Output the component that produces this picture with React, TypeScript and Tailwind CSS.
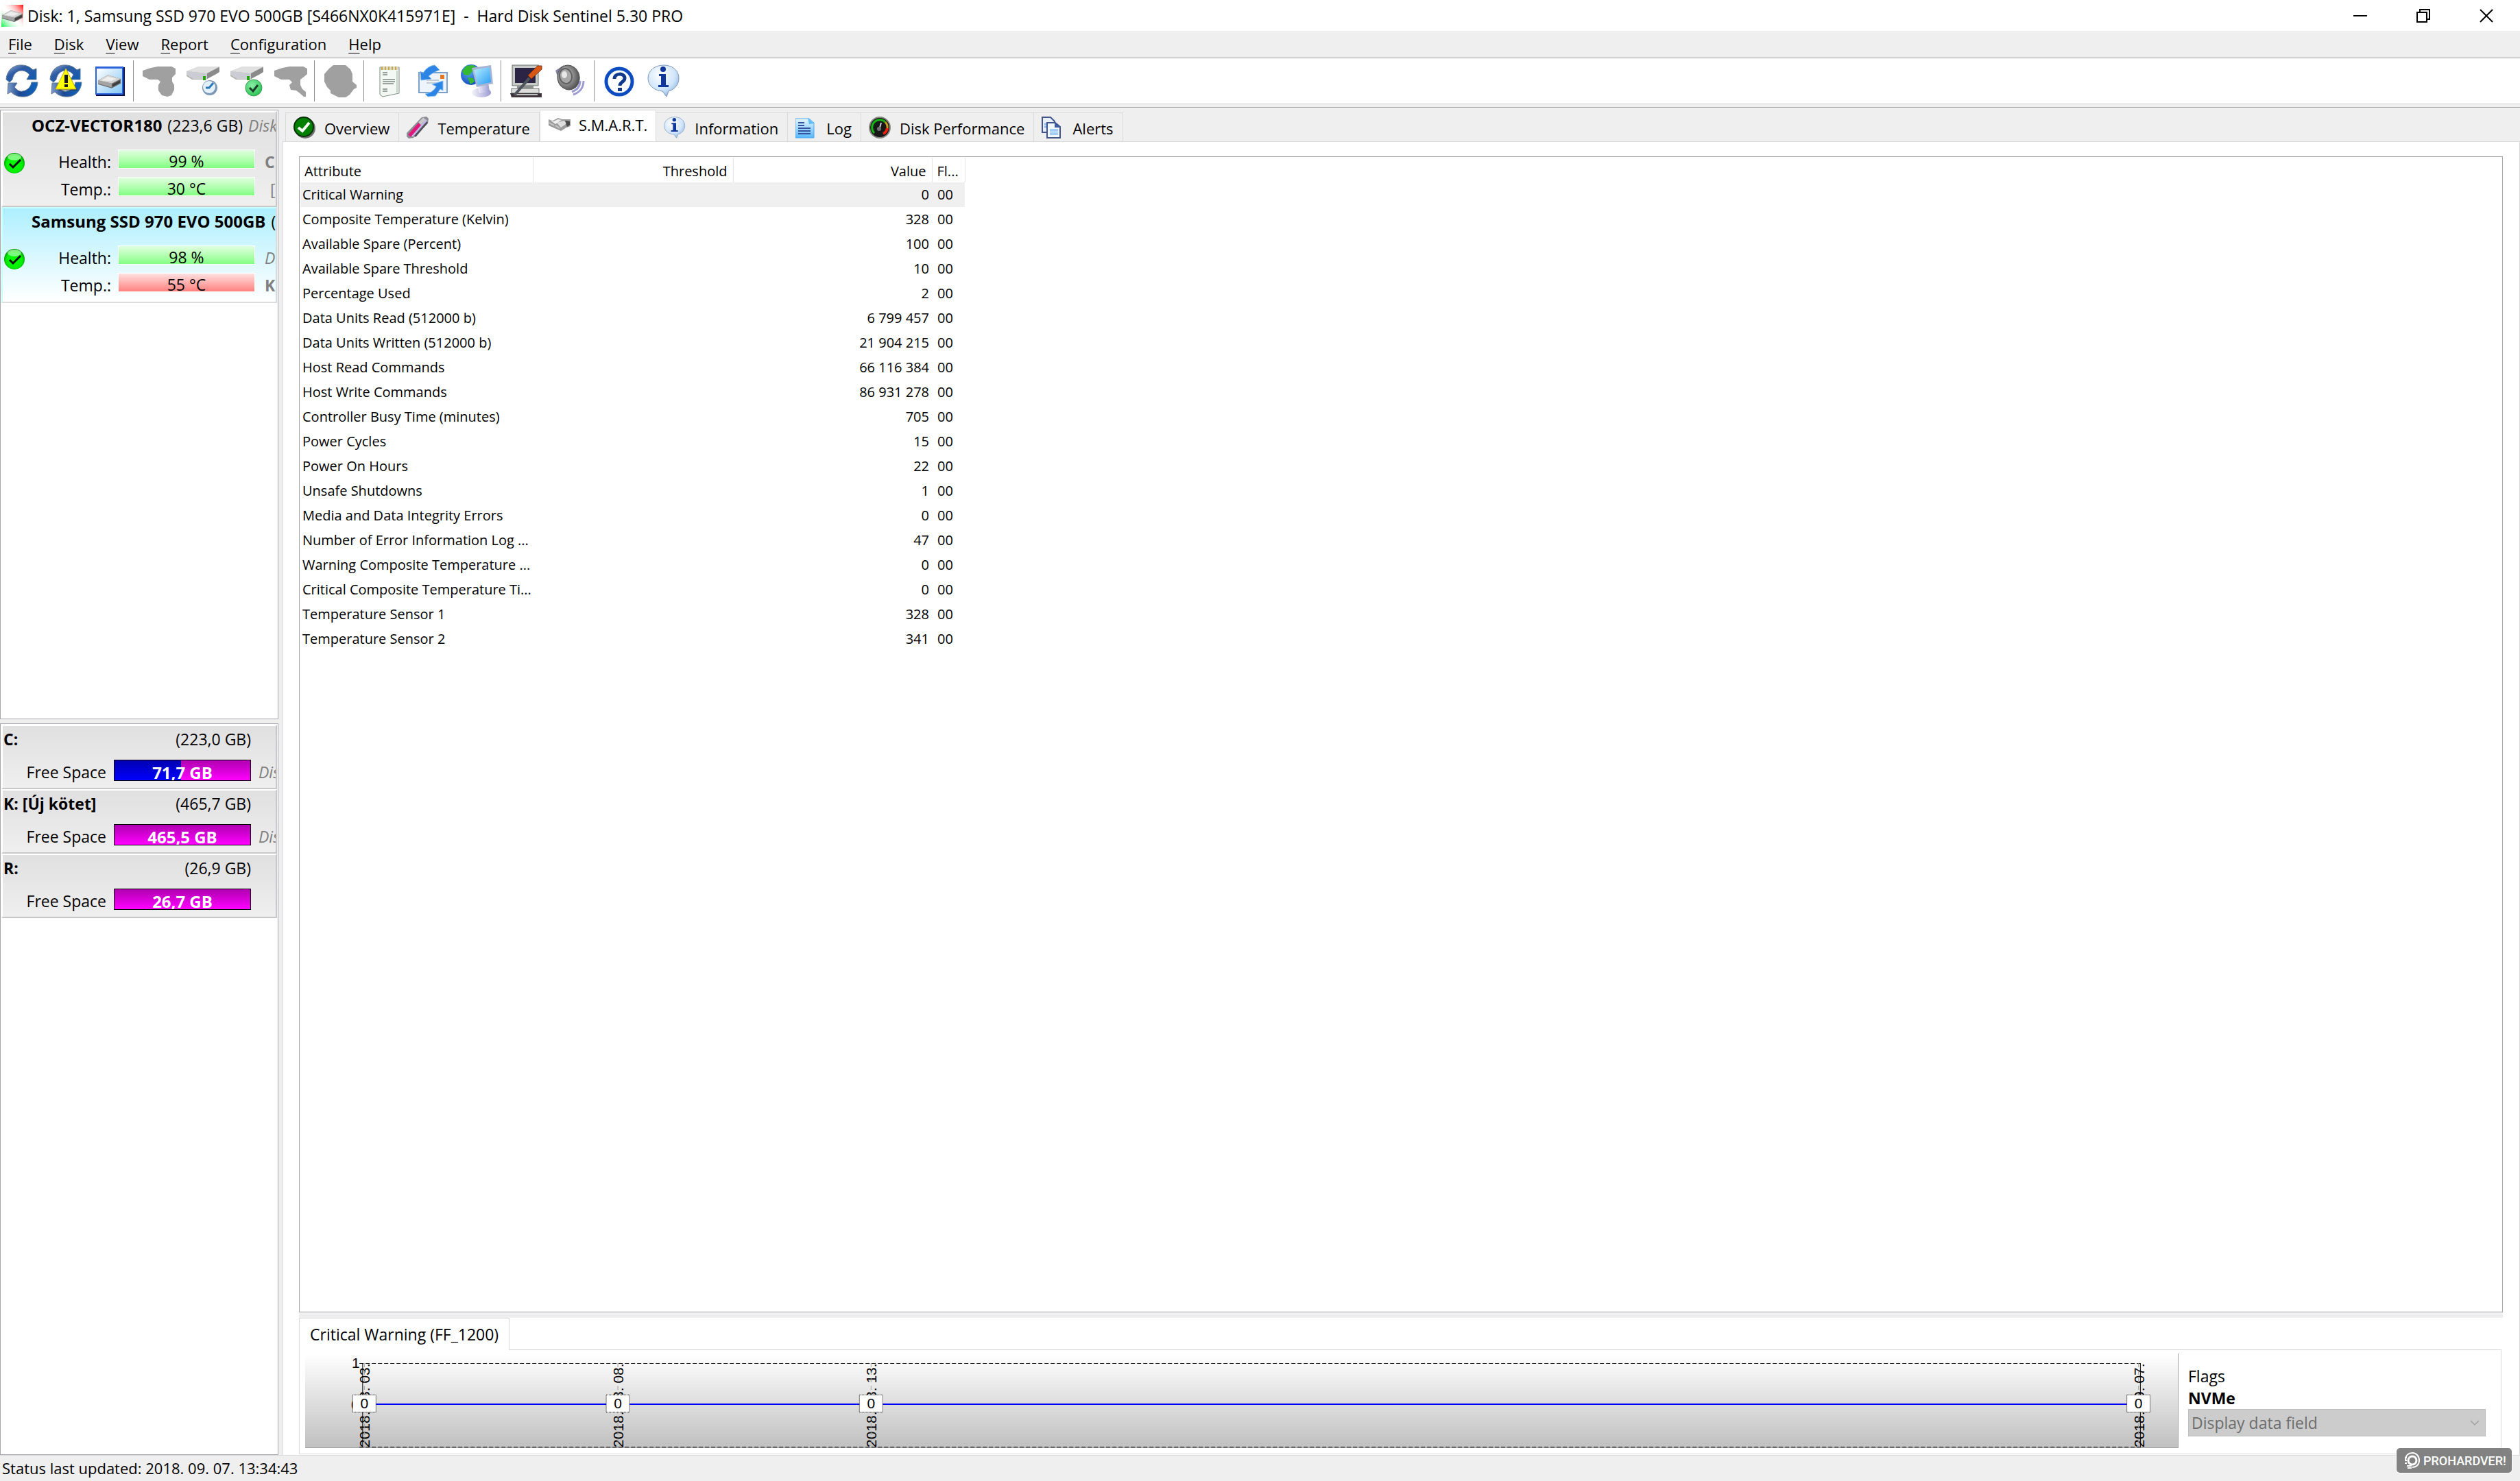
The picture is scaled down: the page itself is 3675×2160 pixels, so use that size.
import type { ReactNode } from "react";
import clsx from "clsx";

type Disk = {
  name: string;
  size: string;
  tag: string;
  health: string;
  temp: string;
  hot: boolean;
  selected: boolean;
  notes: { text: string; className: string }[];
};

const DISKS: Disk[] = [
  {
    name: "OCZ-VECTOR180",
    size: "(223,6 GB)",
    tag: "Disk",
    health: "99 %",
    temp: "30 °C",
    hot: false,
    selected: false,
    notes: [
      { text: "C:", className: "font-bold" },
      { text: "[L", className: "pl-2" },
    ],
  },
  {
    name: "Samsung SSD 970 EVO 500GB",
    size: "(465,8 GB)",
    tag: "",
    health: "98 %",
    temp: "55 °C",
    hot: true,
    selected: true,
    notes: [
      { text: "Disk", className: "italic" },
      { text: "K:", className: "font-bold" },
    ],
  },
];

const VOLUMES = [
  { name: "C:", size: "(223,0 GB)", free: "71,7 GB", used: 49, note: "Disk" },
  { name: "K: [Új kötet]", size: "(465,7 GB)", free: "465,5 GB", used: 0, note: "Disk" },
  { name: "R:", size: "(26,9 GB)", free: "26,7 GB", used: 0, note: "" },
];

const ATTRIBUTES: [string, string][] = [
  ["Critical Warning", "0"],
  ["Composite Temperature (Kelvin)", "328"],
  ["Available Spare (Percent)", "100"],
  ["Available Spare Threshold", "10"],
  ["Percentage Used", "2"],
  ["Data Units Read (512000 b)", "6 799 457"],
  ["Data Units Written (512000 b)", "21 904 215"],
  ["Host Read Commands", "66 116 384"],
  ["Host Write Commands", "86 931 278"],
  ["Controller Busy Time (minutes)", "705"],
  ["Power Cycles", "15"],
  ["Power On Hours", "22"],
  ["Unsafe Shutdowns", "1"],
  ["Media and Data Integrity Errors", "0"],
  ["Number of Error Information Log ...", "47"],
  ["Warning Composite Temperature ...", "0"],
  ["Critical Composite Temperature Ti...", "0"],
  ["Temperature Sensor 1", "328"],
  ["Temperature Sensor 2", "341"],
];

const POINTS = [
  { date: "2018. 08. 03.", x: "3.16%" },
  { date: "2018. 08. 08.", x: "16.7%" },
  { date: "2018. 08. 13.", x: "30.22%" },
  { date: "2018. 09. 07.", x: "97.9%" },
];

/* ---------- icons ---------- */

function Defs() {
  return (
    <svg className="absolute h-0 w-0" aria-hidden="true">
      <defs>
        <linearGradient id="blueArc" x1="0" y1="0" x2="1" y2="1">
          <stop offset="0" stopColor="#9fb4d6" />
          <stop offset="0.35" stopColor="#2f5ca4" />
          <stop offset="1" stopColor="#0c5cb0" />
        </linearGradient>
        <linearGradient id="blueArc2" x1="0" y1="0" x2="1" y2="0">
          <stop offset="0" stopColor="#7f9cc8" />
          <stop offset="0.4" stopColor="#1c4a94" />
          <stop offset="1" stopColor="#0f66c0" />
        </linearGradient>
        <linearGradient id="skyBox" x1="0" y1="0" x2="1" y2="1">
          <stop offset="0" stopColor="#ffffff" />
          <stop offset="1" stopColor="#86c8f4" />
        </linearGradient>
        <radialGradient id="bubble" cx="0.4" cy="0.3" r="0.8">
          <stop offset="0" stopColor="#ffffff" />
          <stop offset="0.6" stopColor="#cfe4fa" />
          <stop offset="1" stopColor="#7fa8d8" />
        </radialGradient>
        <radialGradient id="greenBall" cx="0.5" cy="0.55" r="0.55">
          <stop offset="0" stopColor="#00ff00" />
          <stop offset="0.7" stopColor="#00f000" />
          <stop offset="1" stopColor="#008a00" />
        </radialGradient>
        <radialGradient id="mint" cx="0.4" cy="0.35" r="0.7">
          <stop offset="0" stopColor="#8af0a8" />
          <stop offset="1" stopColor="#28c050" />
        </radialGradient>
        <radialGradient id="cone" cx="0.4" cy="0.4" r="0.7">
          <stop offset="0" stopColor="#e8e8e8" />
          <stop offset="0.5" stopColor="#8c8c8c" />
          <stop offset="1" stopColor="#404040" />
        </radialGradient>
        <radialGradient id="earth" cx="0.4" cy="0.35" r="0.7">
          <stop offset="0" stopColor="#58a8f8" />
          <stop offset="1" stopColor="#1048b8" />
        </radialGradient>
        <linearGradient id="screen" x1="0" y1="0" x2="1" y2="1">
          <stop offset="0" stopColor="#b8f0ff" />
          <stop offset="1" stopColor="#2a9cf4" />
        </linearGradient>
        <linearGradient id="lilac" x1="0" y1="0" x2="1" y2="0">
          <stop offset="0" stopColor="#f4f4fa" />
          <stop offset="1" stopColor="#9c9cd4" />
        </linearGradient>
        <linearGradient id="appGreen" x1="0" y1="1" x2="0.5" y2="0.5">
          <stop offset="0" stopColor="#00f040" />
          <stop offset="1" stopColor="#ffffff" stopOpacity="0" />
        </linearGradient>
        <linearGradient id="appRed" x1="1" y1="0" x2="0.4" y2="0.5">
          <stop offset="0" stopColor="#ff0000" />
          <stop offset="1" stopColor="#ffffff" stopOpacity="0" />
        </linearGradient>
        <linearGradient id="logPage" x1="0" y1="0" x2="0" y2="1">
          <stop offset="0" stopColor="#e4f4ff" />
          <stop offset="1" stopColor="#58b8f8" />
        </linearGradient>
        <linearGradient id="chartBg" x1="0" y1="0" x2="0" y2="1">
          <stop offset="0" stopColor="#ffffff" />
          <stop offset="1" stopColor="#c0c0c0" />
        </linearGradient>
      </defs>
    </svg>
  );
}

function Icon({ children }: { children: ReactNode }) {
  return (
    <svg viewBox="0 0 48 48" className="h-12 w-12" aria-hidden="true">
      {children}
    </svg>
  );
}

function SmallIcon({ children }: { children: ReactNode }) {
  return (
    <svg viewBox="0 0 32 32" className="h-8 w-8 shrink-0" aria-hidden="true">
      {children}
    </svg>
  );
}

// 32x18 drive body, reused at several sizes
function DriveBody() {
  return (
    <g>
      <path d="M1 8 L14 1 L31 6 L31 12 L19 18 L1 13 Z" fill="#6a6a6a" />
      <path d="M1 8 L14 1 L31 6 L19 12 Z" fill="#d2d2d2" />
      <path d="M5 8 L14 3 L25 6 L18 9 Z" fill="#eeeeee" />
      <path d="M1 8 L19 12 V17 L1 12 Z" fill="#a4a4a4" />
      <path d="M20 13 L30 8 V11 L20 16 Z" fill="#3c3c3c" />
    </g>
  );
}

function AppIcon() {
  return (
    <SmallIcon>
      <rect width="32" height="32" fill="#fff" />
      <rect width="32" height="32" fill="url(#appGreen)" />
      <rect width="32" height="32" fill="url(#appRed)" />
      <g transform="translate(0 7)">
        <DriveBody />
      </g>
    </SmallIcon>
  );
}

function RefreshArrows() {
  return (
    <g>
      <path
        d="M1 22 C2 8 12 0 24 1 C31 1 36 4 40 8 L45 6 V22 H31 L35 15 C31 10 27 9 23 9 C16 9 11 15 10 22 L6 26 Z"
        fill="url(#blueArc)"
        stroke="#5f7896"
        strokeWidth="1"
      />
      <path
        d="M47 26 C46 40 36 48 24 47 C17 47 12 44 8 40 L3 43 L4 27 H17 L13 33 C17 38 21 40 25 39 C32 38 37 33 38 26 Z"
        fill="url(#blueArc2)"
        stroke="#5f7896"
        strokeWidth="1"
      />
    </g>
  );
}

function RefreshIcon() {
  return (
    <Icon>
      <RefreshArrows />
    </Icon>
  );
}

function RefreshWarningIcon() {
  return (
    <Icon>
      <RefreshArrows />
      <path d="M26 10 L41 38 H13 Z" fill="#303030" opacity="0.6" />
      <path d="M24 6 L39 36 H9 Z" fill="#ffff00" stroke="#c8b400" strokeWidth="1" />
      <path d="M22 15 H27 V27 H22 Z M22 29 H27 V33 H22 Z" fill="#181818" />
    </Icon>
  );
}

function DiskWindowIcon() {
  return (
    <Icon>
      <rect x="4" y="4" width="42" height="42" fill="#04104c" />
      <rect x="3" y="3" width="41" height="41" fill="#2a62dc" />
      <rect x="5" y="6" width="37" height="36" fill="url(#skyBox)" />
      <g transform="translate(6 14) scale(1.1 1.15)">
        <DriveBody />
      </g>
    </Icon>
  );
}

function DriveOutline() {
  return (
    <g>
      <path d="M0 10 L18 3 H48 V11 L42 15 L28 22 H8 L0 17 Z" fill="#b4b4b4" />
      <path d="M0 10 L18 3 H48 L30 13 Z" fill="#e0e0e0" />
      <path d="M0 10 L30 13 V21 L10 21 L0 15 Z" fill="#ccccd4" />
      <path d="M30 13 L48 4 V11 L30 21 Z" fill="#8a8a8a" />
      <rect x="24" y="17" width="4" height="6" fill="#28a010" />
    </g>
  );
}

function DriveGreyIcon() {
  return (
    <Icon>
      <path
        d="M0 9 L12 5 L22 3 H42 L48 6 V14 L43 19 V25 L46 30 V37 L42 45 L36 47 L28 45 L23 38 V30 L26 25 L22 22 H10 L0 17 Z"
        fill="#a0a0a0"
      />
    </Icon>
  );
}

function DriveClockIcon() {
  return (
    <Icon>
      <DriveOutline />
      <circle cx="34" cy="34" r="11" fill="#7c98b4" />
      <circle cx="33" cy="33" r="9" fill="#e4f0fa" />
      <path d="M39 27 L33 34 H28" fill="none" stroke="#2a78b8" strokeWidth="3" />
    </Icon>
  );
}

function DriveCheckIcon() {
  return (
    <Icon>
      <DriveOutline />
      <circle cx="34" cy="34" r="12" fill="url(#mint)" stroke="#3c9c58" strokeWidth="1" />
      <path d="M28 34 L33 39 L40 30" fill="none" stroke="#1c3c28" strokeWidth="3" />
    </Icon>
  );
}

function DriveToolIcon() {
  return (
    <Icon>
      <path
        d="M0 9 L12 5 L22 3 H42 L48 6 V14 L42 19 L38 22 V30 L41 36 L46 40 V47 H43 L36 41 L32 38 L24 37 L22 30 L26 26 L22 22 H10 L0 17 Z"
        fill="#a0a0a0"
      />
    </Icon>
  );
}

function RoundGreyIcon() {
  return (
    <Icon>
      <path
        d="M8 6 L14 1 H32 L39 7 L42 14 V25 L48 30 V34 L44 36 L38 44 L32 48 H22 L10 42 V38 L5 33 L1 25 V14 Z"
        fill="#a0a0a0"
      />
    </Icon>
  );
}

function NotepadIcon() {
  return (
    <Icon>
      <path d="M10 4 H38 V42 L14 47 L10 44 Z" fill="#f4f8f4" stroke="#7c8c84" strokeWidth="1" />
      <path d="M11 3 H37 V8 H11 Z" fill="#dcd8c4" />
      <path d="M13 3 V8 M18 3 V8 M23 3 V8 M28 3 V8 M33 3 V8" stroke="#c8a84c" strokeWidth="2" />
      <path d="M14 12 H21 M14 15 H21 M14 22 H32 M14 25 H32 M14 28 H30 M14 36 H21 M14 39 H21" stroke="#9ca4a0" strokeWidth="2" />
      <path d="M35 9 V41" stroke="#c4d4cc" strokeWidth="2" />
    </Icon>
  );
}

function MailIcon() {
  return (
    <Icon>
      <rect x="3" y="12" width="41" height="29" fill="#eef4fc" stroke="#7ca0cc" strokeWidth="2" />
      <rect x="34" y="15" width="6" height="6" fill="#e07828" />
      <path d="M14 23 H32 M14 27 H30" stroke="#c4ccd8" strokeWidth="2" />
      <path d="M5 10 L6 23 L21 21 L17 17 C22 13 27 10 33 8 L26 1 C18 2 12 7 9 13 Z" fill="#2c84e4" stroke="#78b4f0" strokeWidth="1" />
      <path d="M38 24 V38 L34 36 L27 46 L16 47 L12 43 C20 42 26 37 28 32 L22 29 Z" fill="#2c84e4" stroke="#88c0f8" strokeWidth="1" />
    </Icon>
  );
}

function GlobeIcon() {
  return (
    <Icon>
      <circle cx="15" cy="15" r="15" fill="url(#earth)" />
      <path d="M8 2 L18 1 L24 5 L16 11 L12 16 L5 15 L2 10 Z M10 19 L18 20 L20 25 L14 29 Z" fill="#34b830" />
      <ellipse cx="30" cy="41" rx="14" ry="7" fill="url(#lilac)" />
      <path d="M24 28 L40 26 L42 40 L27 42 Z" fill="url(#lilac)" />
      <path d="M16 5 L44 1 L47 28 L23 33 Z" fill="#a8b4d4" />
      <path d="M19 8 L42 4 L44 26 L25 30 Z" fill="url(#screen)" />
    </Icon>
  );
}

function ComputerIcon() {
  return (
    <Icon>
      <rect x="3" y="1" width="38" height="30" fill="#c8ccc8" stroke="#6c706c" strokeWidth="1" />
      <rect x="7" y="5" width="30" height="22" fill="#2c2444" />
      <path d="M10 31 H34 V35 H10 Z" fill="#8c908c" />
      <path d="M2 35 H42 V42 H2 Z" fill="#dcdcdc" stroke="#6c706c" strokeWidth="1" />
      <path d="M0 42 H46 V48 H2 Z" fill="#3c3438" />
      <path d="M6 44 H40" stroke="#c0c0c0" strokeWidth="2" />
      <path d="M6 45 L28 20" stroke="#50545c" strokeWidth="4" />
      <path d="M26 16 L40 2 H46 V7 L31 21 Z" fill="#d85818" stroke="#8c3008" strokeWidth="1" />
    </Icon>
  );
}

function SpeakerIcon() {
  return (
    <Icon>
      <path d="M2 9 L14 1 L20 16 L6 20 Z" fill="#8484a8" />
      <ellipse cx="21" cy="19" rx="16" ry="18" fill="url(#cone)" stroke="#505050" strokeWidth="1" transform="rotate(-14 21 19)" />
      <ellipse cx="17" cy="17" rx="9" ry="11" fill="#a8a8a8" stroke="#606060" strokeWidth="2" transform="rotate(-14 17 17)" />
      <ellipse cx="15" cy="15" rx="4" ry="5" fill="#e8e8e8" />
      <path d="M38 24 C38 31 34 37 26 40 M43 24 C43 34 37 41 28 44" fill="none" stroke="#9c9cd0" strokeWidth="3" />
    </Icon>
  );
}

function HelpIcon() {
  return (
    <Icon>
      <circle cx="23" cy="25" r="19" fill="#fff" stroke="#0c4cc0" strokeWidth="5" />
      <path d="M16 21 C16 12 31 12 31 20 C31 26 24 25 24 31" fill="none" stroke="#10388c" strokeWidth="5" />
      <rect x="21" y="34" width="6" height="5" fill="#10388c" />
    </Icon>
  );
}

function InfoBubble() {
  return (
    <g>
      <path
        d="M24 1 C37 1 46 9 46 20 C46 30 39 37 31 39 L28 47 L22 39 C10 38 1 31 1 20 C1 9 11 1 24 1 Z"
        fill="url(#bubble)"
        stroke="#7c98bc"
        strokeWidth="1"
      />
      <circle cx="23" cy="7" r="4" fill="#10389c" />
      <path d="M17 14 H27 V30 H31 V33 H16 V30 H20 V17 H17 Z" fill="#10389c" />
    </g>
  );
}

function InfoIcon() {
  return (
    <Icon>
      <InfoBubble />
    </Icon>
  );
}

function OverviewIcon() {
  return (
    <SmallIcon>
      <circle cx="17" cy="17" r="15" fill="#707070" />
      <circle cx="15" cy="15" r="14" fill="#008000" stroke="#003000" strokeWidth="2" />
      <path d="M7 16 L13 21 L23 9" fill="none" stroke="#fff" strokeWidth="4" />
    </SmallIcon>
  );
}

function ThermometerIcon() {
  return (
    <SmallIcon>
      <path d="M0 24 L22 1 L29 0 L32 3 L31 10 L10 31 L3 32 L0 29 Z" fill="#8c8c94" />
      <path d="M12 29 L30 8" stroke="#50505c" strokeWidth="3" />
      <path d="M8 29 L29 5" stroke="#c0b8e4" strokeWidth="3" />
      <path d="M4 28 L19 11" stroke="#e0187c" strokeWidth="5" />
      <path d="M19 10 L26 3" stroke="#c8c8c8" strokeWidth="5" />
    </SmallIcon>
  );
}

function SmartIcon() {
  return (
    <SmallIcon>
      <path d="M0 8 L6 10 L14 6 L20 8 L32 8 V18 L26 20 L18 25 L9 21 L0 17 Z" fill="#9c9c9c" />
      <path d="M2 9 L7 11 L14 8 L19 9 L10 15 Z" fill="#f0f0f0" />
      <path d="M12 13 L22 10 L28 13 L18 20 Z" fill="#dedede" />
      <path d="M24 10 L31 11 V16 L27 19 Z" fill="#484848" />
      <path d="M1 13 L8 17 M10 17 L16 21" stroke="#c8c8c8" strokeWidth="2" />
    </SmallIcon>
  );
}

function InformationIcon() {
  return (
    <SmallIcon>
      <g transform="scale(0.667)">
        <InfoBubble />
      </g>
    </SmallIcon>
  );
}

function LogIcon() {
  return (
    <SmallIcon>
      <path d="M0 3 H20 L27 9 V31 H0 Z" fill="url(#logPage)" stroke="#50a8f0" strokeWidth="1" />
      <path d="M18 2 L27 10 L20 11 Z" fill="#5cbcfc" />
      <path d="M4 9 H13 M4 13 H13 M4 17 H22 M4 21 H22 M4 25 H22" stroke="#3454a0" strokeWidth="2" />
    </SmallIcon>
  );
}

function GaugeIcon() {
  return (
    <SmallIcon>
      <circle cx="16" cy="16" r="15" fill="#181818" stroke="#888880" strokeWidth="2" />
      <path d="M8 24 A11 11 0 1 1 24 8" fill="none" stroke="#14b414" strokeWidth="3" />
      <path d="M24 8 A11 11 0 0 1 27 17" fill="none" stroke="#c8a020" strokeWidth="3" />
      <path d="M27 17 A11 11 0 0 1 21 25" fill="none" stroke="#f02010" strokeWidth="4" />
      <path d="M15 20 L18 9" stroke="#d0d0d0" strokeWidth="2" />
      <circle cx="15" cy="18" r="3" fill="#707070" />
    </SmallIcon>
  );
}

function AlertsIcon() {
  return (
    <SmallIcon>
      <path d="M1 1 H13 L19 7 V23 H1 Z" fill="#e8f0fc" stroke="#44548c" strokeWidth="2" />
      <path d="M4 11 H10 M4 15 H10" stroke="#90bcf4" strokeWidth="3" />
      <path d="M8 9 H20 L27 15 V31 H8 Z" fill="#f2f8ff" stroke="#44548c" strokeWidth="2" />
      <path d="M19 8 L28 16 H19 Z" fill="#3c5ca4" />
      <path d="M12 20 H24 M12 25 H24" stroke="#a4ccf8" strokeWidth="4" />
    </SmallIcon>
  );
}

function OkBall() {
  return (
    <svg viewBox="0 0 30 30" className="h-[30px] w-[30px]" aria-hidden="true">
      <circle cx="15" cy="15" r="15" fill="url(#greenBall)" />
      <ellipse cx="15" cy="6" rx="10" ry="5" fill="#b0ffb0" opacity="0.7" />
      <path d="M8 16 L13 21 L24 10" fill="none" stroke="#101010" strokeWidth="3" />
    </svg>
  );
}

/* ---------- window chrome ---------- */

function TitleBar() {
  return (
    <header className="flex h-[45px] shrink-0 items-center bg-white pr-[3px] pl-[2px]">
      <AppIcon />
      <h1 className="ml-[6px] pt-px text-[23px] whitespace-pre">
        {"Disk: 1, Samsung SSD 970 EVO 500GB [S466NX0K415971E]  -  Hard Disk Sentinel 5.30 PRO"}
      </h1>
      <div className="ml-auto flex">
        <button aria-label="Minimize" className="flex h-[43px] w-[92px] items-center justify-center">
          <svg viewBox="0 0 20 20" className="h-5 w-5">
            <path d="M0 10 H20" stroke="#000" strokeWidth="2" />
          </svg>
        </button>
        <button aria-label="Restore" className="flex h-[43px] w-[92px] items-center justify-center">
          <svg viewBox="0 0 20 20" className="h-5 w-5" fill="none" stroke="#000" strokeWidth="2">
            <rect x="1" y="5" width="14" height="14" />
            <path d="M5 5 V1 H19 V15 H15" />
          </svg>
        </button>
        <button aria-label="Close" className="flex h-[43px] w-[92px] items-center justify-center">
          <svg viewBox="0 0 20 20" className="h-5 w-5">
            <path d="M1 1 L19 19 M19 1 L1 19" stroke="#000" strokeWidth="2" />
          </svg>
        </button>
      </div>
    </header>
  );
}

function MenuBar() {
  const items = ["File", "Disk", "View", "Report", "Configuration", "Help"];
  return (
    <nav className="flex h-10 shrink-0 items-center gap-8 border-b border-[#a0a0a0] bg-[#efefef] pl-3">
      {items.map((item) => (
        <button key={item} className="text-[22px]">
          <span className="underline decoration-1 underline-offset-4">{item[0]}</span>
          {item.slice(1)}
        </button>
      ))}
    </nav>
  );
}

const TOOL_GROUPS: { label: string; icon: ReactNode }[][] = [
  [
    { label: "Refresh", icon: <RefreshIcon /> },
    { label: "Refresh with warnings", icon: <RefreshWarningIcon /> },
    { label: "Disk panel", icon: <DiskWindowIcon /> },
  ],
  [
    { label: "Surface test", icon: <DriveGreyIcon /> },
    { label: "Short self test", icon: <DriveClockIcon /> },
    { label: "Extended self test", icon: <DriveCheckIcon /> },
    { label: "Disk repair", icon: <DriveToolIcon /> },
  ],
  [{ label: "Acoustic", icon: <RoundGreyIcon /> }],
  [
    { label: "Report", icon: <NotepadIcon /> },
    { label: "Send report", icon: <MailIcon /> },
    { label: "Network", icon: <GlobeIcon /> },
  ],
  [
    { label: "Configuration", icon: <ComputerIcon /> },
    { label: "Sound", icon: <SpeakerIcon /> },
  ],
  [
    { label: "Help", icon: <HelpIcon /> },
    { label: "About", icon: <InfoIcon /> },
  ],
];

function Toolbar() {
  return (
    <div className="flex h-[67px] shrink-0 border-b border-[#dadada] bg-white py-[3px]">
      {TOOL_GROUPS.map((group, i) => (
        <div key={i} className="flex">
          {i > 0 && <div className="mr-[5px] ml-[2px] w-px bg-[#909090]" />}
          {group.map((tool) => (
            <button key={tool.label} aria-label={tool.label} className="flex w-16 items-center justify-center">
              {tool.icon}
            </button>
          ))}
        </div>
      ))}
    </div>
  );
}

/* ---------- sidebar ---------- */

function Meter({ label, value, hot, note }: { label: string; value: string; hot: boolean; note: { text: string; className: string } }) {
  return (
    <div className="flex h-7">
      <span className="w-[126px] shrink-0 text-right leading-9">{label}</span>
      <div
        className={clsx(
          "ml-[10px] h-7 w-[200px] shrink-0 border border-white bg-linear-to-b text-center leading-8",
          hot ? "from-[#ffe0e0] to-[#ff8080]" : "from-[#e0ffe0] to-[#80ff80]"
        )}
      >
        {value}
      </div>
      <span className={clsx("ml-[14px] leading-9 text-[#808080]", note.className)}>{note.text}</span>
    </div>
  );
}

function DiskCard({ disk }: { disk: Disk }) {
  return (
    <div
      className={clsx(
        "h-[140px] overflow-hidden border-2 bg-linear-to-b pt-1 whitespace-nowrap",
        disk.selected
          ? "border-t-[#c8ffff] border-r-[#d4dcdc] border-b-[#dcdcdc] border-l-[#c8ffff] from-[#adefff] to-white"
          : "border-t-white border-r-[#c8c8c8] border-b-[#c8c8c8] border-l-white from-[#e0e0e0] to-[#efefef]"
      )}
    >
      <div className="mb-5 flex gap-2 pl-[42px] leading-[30px]">
        <strong className="text-2xl leading-[30px]">{disk.name}</strong>
        <span>{disk.size}</span>
        {disk.tag && <em className="text-[#808080]">{disk.tag}</em>}
      </div>
      <div className="flex">
        <div className="w-8 shrink-0 pt-[5px] pl-[2px]">
          <OkBall />
        </div>
        <div className="flex flex-col gap-3">
          <Meter label="Health:" value={disk.health} hot={false} note={disk.notes[0]} />
          <Meter label="Temp.:" value={disk.temp} hot={disk.hot} note={disk.notes[1]} />
        </div>
      </div>
    </div>
  );
}

function VolumeCard({ volume }: { volume: (typeof VOLUMES)[number] }) {
  return (
    <div className="h-[94px] overflow-hidden border-2 border-t-white border-r-[#c8c8c8] border-b-[#c8c8c8] border-l-white bg-linear-to-b from-[#e0e0e0] to-[#efefef] pt-1 whitespace-nowrap">
      <div className="mb-[15px] flex justify-between pr-9 pl-px leading-[30px]">
        <strong>{volume.name}</strong>
        <span>{volume.size}</span>
      </div>
      <div className="flex h-[31px]">
        <span className="w-[151px] shrink-0 text-right leading-9">Free Space</span>
        <div className="relative ml-[11px] h-[31px] w-[200px] shrink-0 overflow-hidden border border-black bg-linear-to-b from-[#b000b0] to-[#ff00ff]">
          <div
            className="absolute inset-y-0 left-0 bg-linear-to-b from-[#0000b0] to-[#0000ff]"
            style={{ width: `${volume.used}%` }}
          />
          <strong className="relative block text-center text-2xl leading-9 text-white">{volume.free}</strong>
        </div>
        {volume.note && <em className="ml-[11px] leading-9 text-[#808080]">{volume.note}</em>}
      </div>
    </div>
  );
}

function Sidebar() {
  return (
    <aside className="flex w-[406px] shrink-0 flex-col gap-[6px] text-[23px]">
      <section className="min-h-0 flex-5 border border-[#a5a5ab] bg-white p-px">
        {DISKS.map((disk) => (
          <DiskCard key={disk.name} disk={disk} />
        ))}
      </section>
      <section className="min-h-0 flex-6 border border-[#a5a5ab] bg-white p-px">
        {VOLUMES.map((volume) => (
          <VolumeCard key={volume.name} volume={volume} />
        ))}
      </section>
    </aside>
  );
}

/* ---------- main pane ---------- */

const TABS = [
  { label: "Overview", icon: <OverviewIcon /> },
  { label: "Temperature", icon: <ThermometerIcon /> },
  { label: "S.M.A.R.T.", icon: <SmartIcon />, active: true },
  { label: "Information", icon: <InformationIcon /> },
  { label: "Log", icon: <LogIcon /> },
  { label: "Disk Performance", icon: <GaugeIcon /> },
  { label: "Alerts", icon: <AlertsIcon /> },
];

function Tabs() {
  return (
    <div role="tablist" className="flex h-[46px] shrink-0 items-end pl-1 text-[22px]">
      {TABS.map((tab) => (
        <button
          key={tab.label}
          role="tab"
          aria-selected={!!tab.active}
          className={clsx(
            "flex items-center",
            tab.active
              ? "-mb-px h-[47px] gap-3 border border-b-0 border-[#dadada] bg-white px-3 pb-1"
              : "h-[42px] gap-[13px] border-t border-r border-[#dadada] pr-[13px] pl-[11px] first:border-l"
          )}
        >
          {tab.icon}
          <span className={clsx(!tab.active && "pt-[3px]")}>{tab.label}</span>
        </button>
      ))}
    </div>
  );
}

function AttributeTable() {
  return (
    <div className="min-h-0 flex-1 border border-[#a5a5ab] bg-white p-px">
      <table className="w-[969px] table-fixed text-[20px] leading-9 whitespace-nowrap">
        <colgroup>
          <col className="w-[339px]" />
          <col className="w-[292px]" />
          <col className="w-[290px]" />
          <col className="w-[48px]" />
        </colgroup>
        <thead>
          <tr className="h-9 leading-8">
            <th className="border-r border-[#e5e5e5] p-0 pt-1 pl-[6px] text-left font-normal">Attribute</th>
            <th className="border-r border-[#e5e5e5] p-0 pt-1 pr-2 text-right font-normal">Threshold</th>
            <th className="border-r border-[#e5e5e5] p-0 pt-1 pr-2 text-right font-normal">Value</th>
            <th className="border-r border-[#e5e5e5] p-0 pt-1 pl-[7px] text-left font-normal">Fl...</th>
          </tr>
        </thead>
        <tbody>
          {ATTRIBUTES.map(([name, value], i) => (
            <tr key={name} className={clsx("h-9", i === 0 && "bg-[#f0f0f0]")}>
              <td className="p-0 pl-[3px]">{name}</td>
              <td className="p-0" />
              <td className="p-0 pr-1 text-right">{value}</td>
              <td className="p-0 pl-2">00</td>
            </tr>
          ))}
        </tbody>
      </table>
    </div>
  );
}

function HistoryChart() {
  return (
    <svg
      className="h-[138px] min-w-0 flex-1 border-r border-b border-[#a0a0a0] font-['Liberation_Sans',Arial,sans-serif] text-[21px]"
      role="img"
      aria-label="Critical Warning history"
    >
      <rect width="100%" height="100%" fill="url(#chartBg)" />
      <text x="68" y="21">1</text>
      <text x="67" y="82">0</text>
      <text x="60" y="151">-1</text>
      <line x1="2.9%" x2="98%" y1="14.5" y2="14.5" stroke="#000" strokeDasharray="6 3" />
      <line x1="3.07%" x2="3.07%" y1="14" y2="137" stroke="#000" />
      <line x1="98%" x2="98%" y1="14" y2="137" stroke="#000" />
      {POINTS.map((p) => (
        <svg key={p.date} x={p.x} y="0" className="overflow-visible">
          <text transform="translate(8 137) rotate(-90)">{p.date}</text>
          <line x1="0" x2="0" y1="14" y2="137" stroke="#a0a0a0" strokeDasharray="6 5" />
        </svg>
      ))}
      <line x1="3.16%" x2="97.9%" y1="74" y2="74" stroke="#0000ff" strokeWidth="2" />
      {POINTS.map((p) => (
        <svg key={p.date} x={p.x} y="0" className="overflow-visible">
          <rect x="-17" y="60.5" width="34" height="25" fill="#fff" stroke="#000" strokeDasharray="1 1" />
          <text x="0" y="80" textAnchor="middle">0</text>
        </svg>
      ))}
      <line x1="2.9%" x2="98%" y1="136.5" y2="136.5" stroke="#000" strokeDasharray="6 3" />
    </svg>
  );
}

function HistoryPanel() {
  return (
    <div className="flex shrink-0 flex-col border-t-8 border-[#efefef] bg-white text-[23px]">
      <div role="tablist" className="flex h-[46px]">
        <button
          role="tab"
          aria-selected="true"
          className="relative z-10 -mb-px h-[47px] w-[307px] border border-b-0 border-[#dadada] bg-white pl-[15px] text-left"
        >
          Critical Warning (FF_1200)
        </button>
      </div>
      <div className="mr-[2px] mb-px flex h-[153px] border border-[#dadada] pt-[5px] pl-2">
        <HistoryChart />
        <div className="flex w-[470px] shrink-0 flex-col pt-[17px] pr-[22px] pl-[14px] leading-8">
          <label htmlFor="data-field">Flags</label>
          <strong>NVMe</strong>
          <div className="relative">
            <select
              id="data-field"
              disabled
              className="h-10 w-full appearance-none border border-[#bfbfbf] bg-[#cccccc] pl-1 text-[#6d6d6d]"
            >
              <option>Display data field</option>
            </select>
            <svg viewBox="0 0 14 9" className="absolute top-4 right-[9px] h-[9px] w-[14px]" aria-hidden="true">
              <path d="M1 1 L7 7 L13 1" fill="none" stroke="#a0a0a0" strokeWidth="1.5" />
            </svg>
          </div>
        </div>
      </div>
    </div>
  );
}

function Watermark() {
  return (
    <div className="absolute right-3 bottom-3 flex h-9 w-[168px] items-center gap-1 rounded-[5px] bg-[#7b7b7b]/95 pl-[11px] font-[Roboto,sans-serif] text-[18px] font-medium text-white ring-1 ring-white/80">
      <svg viewBox="0 0 24 26" className="h-[26px] w-6 shrink-0" fill="none" stroke="#fff" aria-hidden="true">
        <path d="M2 13 C2 5 7 2 12 2 C18 2 22 7 22 13 C22 19 18 23 12 23" strokeWidth="2" />
        <circle cx="12" cy="13" r="6" strokeWidth="3" />
        <path d="M1 9 H4 M1 13 H4 M1 17 H4 M4 21 H11 M5 24 H11" strokeWidth="2" />
      </svg>
      PROHARDVER!
    </div>
  );
}

export default function App() {
  return (
    <div className="relative flex h-screen flex-col overflow-hidden bg-[#efefef] font-['Open_Sans','Noto_Sans',sans-serif] text-black">
      <Defs />
      <TitleBar />
      <MenuBar />
      <Toolbar />
      <div className="mt-1 mb-[3px] h-px shrink-0 bg-[#a0a0a0]" />
      <div className="flex min-h-0 flex-1 border-b border-[#dadada]">
        <Sidebar />
        <main className="ml-[6px] flex min-w-0 flex-1 flex-col">
          <Tabs />
          <div className="flex min-h-0 flex-1 flex-col border border-b-0 border-[#dadada] bg-white pt-[21px] pr-6 pl-[23px]">
            <AttributeTable />
            <HistoryPanel />
          </div>
        </main>
      </div>
      <footer className="flex h-[37px] shrink-0 items-center pl-[3px] text-[22px]">
        Status last updated: 2018. 09. 07. 13:34:43
      </footer>
      <Watermark />
    </div>
  );
}
